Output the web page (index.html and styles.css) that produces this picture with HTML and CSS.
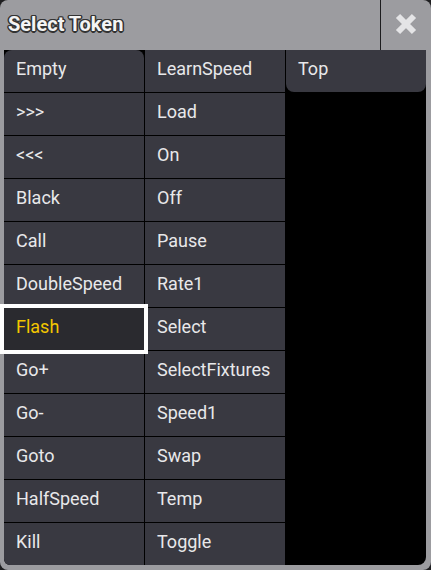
FILE: index.html
```html
<!DOCTYPE html>
<html>
<head>
<meta charset="utf-8">
<link rel="stylesheet" href="styles.css">
</head>
<body>
<div class="window">
  <div class="titlebar">
    <div class="title">Select Token</div>
    <div class="close">
      <svg width="22" height="22" viewBox="0 0 22 22"><path d="M3 3 L19 19 M19 3 L3 19" stroke="#e4e4e6" stroke-width="6" stroke-linecap="butt" fill="none"/></svg>
    </div>
  </div>
  <div class="content">
    <div class="cell first">Empty</div>
    <div class="cell">&gt;&gt;&gt;</div>
    <div class="cell">&lt;&lt;&lt;</div>
    <div class="cell">Black</div>
    <div class="cell">Call</div>
    <div class="cell">DoubleSpeed</div>
    <div class="cell selected">Flash</div>
    <div class="cell">Go+</div>
    <div class="cell">Go-</div>
    <div class="cell">Goto</div>
    <div class="cell">HalfSpeed</div>
    <div class="cell last">Kill</div>
    <div class="cell">LearnSpeed</div>
    <div class="cell">Load</div>
    <div class="cell">On</div>
    <div class="cell">Off</div>
    <div class="cell">Pause</div>
    <div class="cell">Rate1</div>
    <div class="cell">Select</div>
    <div class="cell">SelectFixtures</div>
    <div class="cell">Speed1</div>
    <div class="cell">Swap</div>
    <div class="cell">Temp</div>
    <div class="cell">Toggle</div>
    <div class="cell top">Top</div>
  </div>
</div>
</body>
</html>
```
FILE: styles.css
```css
html, body {
  margin: 0;
  padding: 0;
  background: #1e1e20;
}
body {
  width: 431px;
  height: 570px;
  font-family: Roboto, "Noto Sans", sans-serif;
}
.window {
  width: 431px;
  height: 570px;
  background: #9c9ca0;
  border-radius: 8px;
  display: flex;
  flex-direction: column;
  overflow: hidden;
}
.titlebar {
  height: 50px;
  display: flex;
  align-items: stretch;
  flex: none;
}
.title {
  flex: 1;
  display: flex;
  align-items: center;
  padding-left: 8px;
  padding-bottom: 2px;
  font-size: 20px;
  font-weight: bold;
  color: #f4f4f4;
  text-shadow: -1px -1px 0 #333, 1px -1px 0 #333, -1px 1px 0 #333, 1px 1px 0 #333,
    0 -1.5px 0 #333, 0 1.5px 0 #333, -1.5px 0 0 #333, 1.5px 0 0 #333;
}
.close {
  width: 50px;
  border-left: 1px solid #1c1c1e;
  display: flex;
  align-items: center;
  justify-content: center;
  padding-bottom: 2px;
}
.content {
  margin: 0 5px 5px 4px;
  flex: 1;
  background: #000;
  border-radius: 0 0 8px 6px;
  display: grid;
  grid-template-columns: 140px 140px 140px;
  grid-template-rows: repeat(12, 42px);
  grid-auto-flow: column;
  column-gap: 1px;
  row-gap: 1px;
}
.cell {
  background: #393941;
  color: #e8e8ea;
  font-size: 18px;
  display: flex;
  align-items: center;
  padding-left: 12px;
  padding-bottom: 6px;
  box-sizing: border-box;
  white-space: nowrap;
}
.first {
  border-radius: 8px 8px 0 0;
}
.last {
  border-radius: 0 0 0 6px;
}
.top {
  grid-column: 3;
  grid-row: 1;
  border-radius: 0 0 8px 8px;
}
.selected {
  background: #2a2a2f;
  color: #f3c600;
  box-shadow: 0 0 0 4px #ffffff;
  position: relative;
  z-index: 1;
}
```
